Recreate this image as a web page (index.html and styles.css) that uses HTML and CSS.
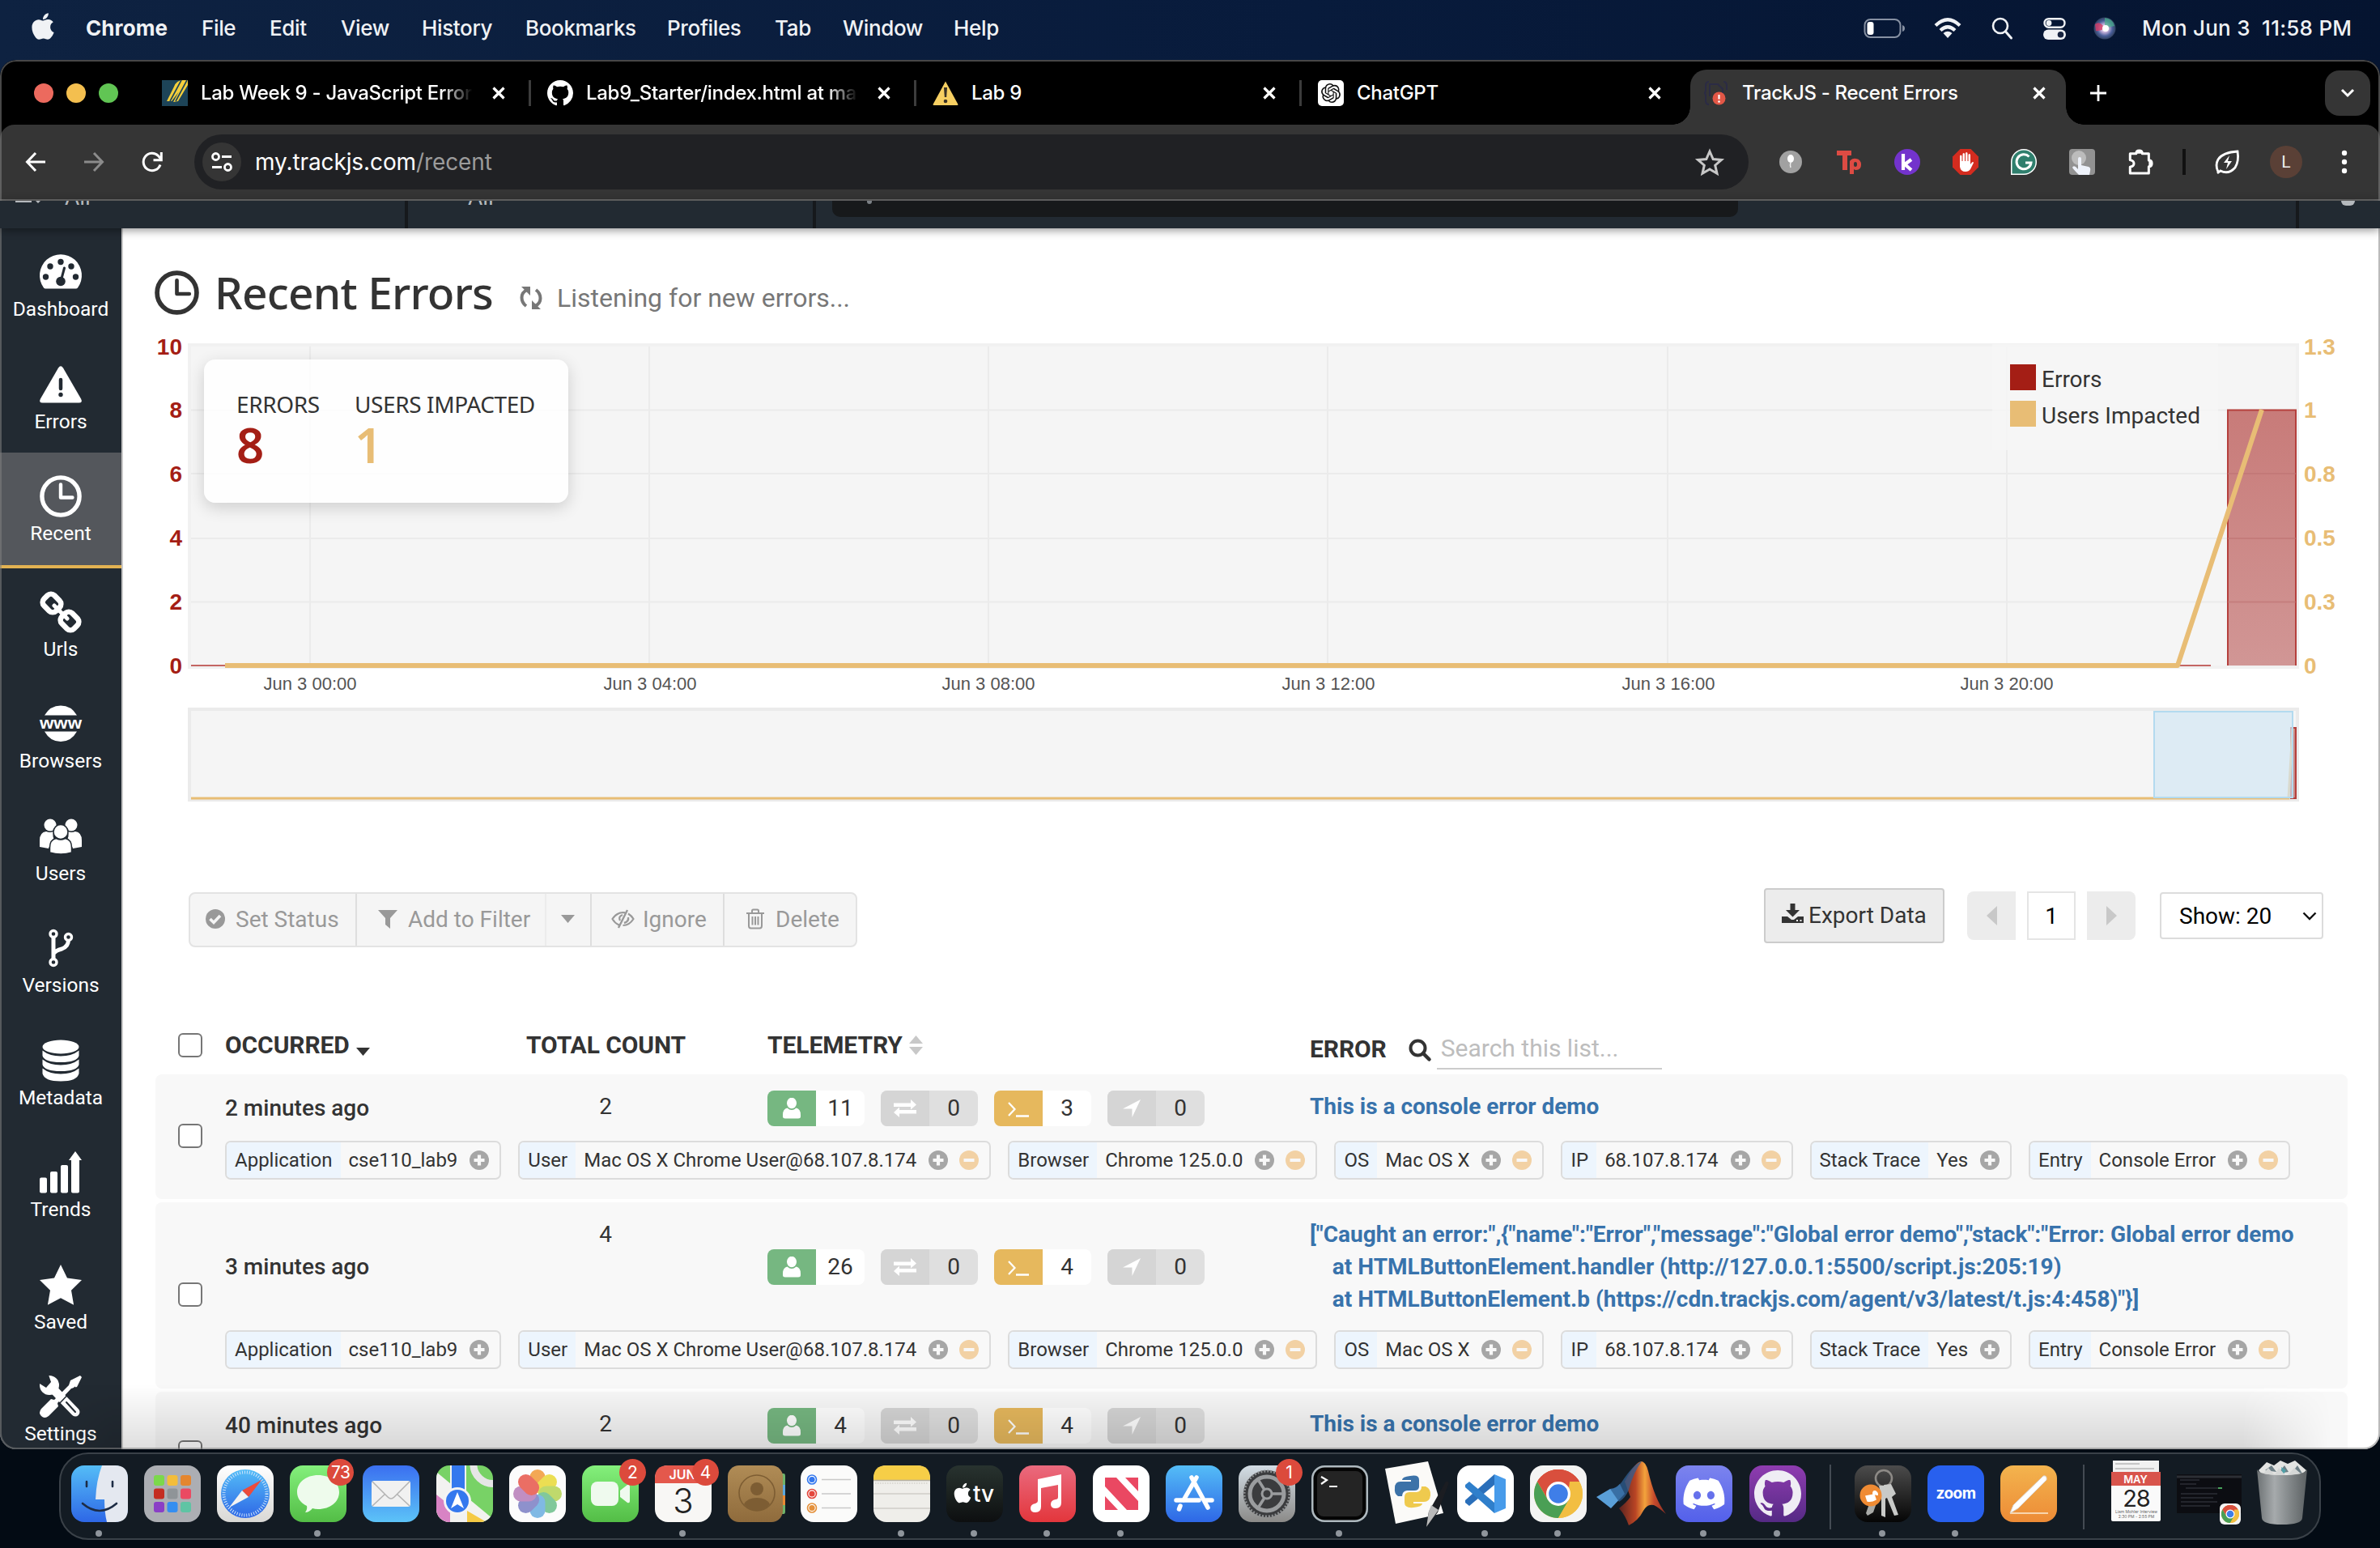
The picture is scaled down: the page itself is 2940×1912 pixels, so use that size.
FILE: index.html
```html
<!DOCTYPE html>
<html lang="en">
<head>
<meta charset="utf-8">
<title>TrackJS - Recent Errors</title>
<link rel="stylesheet" href="styles.css">
</head>
<body>
<svg class="defs" width="0" height="0" aria-hidden="true">
  <defs>
    <symbol id="github" viewBox="0 0 16 16"><path d="M8 0C3.58 0 0 3.58 0 8c0 3.54 2.29 6.53 5.47 7.59.4.07.55-.17.55-.38 0-.19-.01-.82-.01-1.49-2.01.37-2.53-.49-2.69-.94-.09-.23-.48-.94-.82-1.13-.28-.15-.68-.52-.01-.53.63-.01 1.08.58 1.23.82.72 1.21 1.87.87 2.33.66.07-.52.28-.87.51-1.07-1.78-.2-3.64-.89-3.64-3.95 0-.87.31-1.59.82-2.15-.08-.2-.36-1.02.08-2.12 0 0 .67-.21 2.2.82.64-.18 1.32-.27 2-.27s1.36.09 2 .27c1.53-1.04 2.2-.82 2.2-.82.44 1.1.16 1.92.08 2.12.51.56.82 1.27.82 2.15 0 3.07-1.87 3.75-3.65 3.95.29.25.54.73.54 1.48 0 1.07-.01 1.93-.01 2.2 0 .21.15.46.55.38A8.01 8.01 0 0 0 16 8c0-4.42-3.58-8-8-8z"/></symbol>
    <symbol id="apple" viewBox="0 0 384 512"><path d="M318.7 268.7c-.2-36.7 16.4-64.4 50-84.8-18.8-26.9-47.2-41.7-84.7-44.6-35.5-2.8-74.3 20.7-88.5 20.7-15 0-49.4-19.7-76.4-19.7C63.3 141.2 4 184.8 4 273.5q0 39.3 14.4 81.2c12.8 36.7 59 126.7 107.2 125.2 25.2-.6 43-17.9 75.8-17.9 31.8 0 48.3 17.9 76.4 17.9 48.6-.7 90.4-82.5 102.6-119.3-65.2-30.7-61.7-90-61.7-91.9zm-56.6-164.2c27.3-32.4 24.8-61.9 24-72.5-24.1 1.4-52 16.4-67.9 34.9-17.5 19.8-27.8 44.3-25.6 71.9 26.1 2 49.9-11.4 69.5-34.3z"/></symbol>
    <symbol id="close" viewBox="0 0 18 18"><path d="M2.5 2.5l13 13M15.5 2.5l-13 13" stroke="currentColor" stroke-width="3.2" fill="none"/></symbol>
    <symbol id="clock" viewBox="0 0 54 54"><circle cx="27" cy="27" r="24" fill="none" stroke="currentColor" stroke-width="5.6"/><path d="M27 12v16.500h15" fill="none" stroke="currentColor" stroke-width="4.600" stroke-linecap="round" stroke-linejoin="round"/></symbol>
    <symbol id="plus" viewBox="0 0 24 24"><circle cx="12" cy="12" r="12" fill="#a6a6a6"/><path d="M12 5.500v13M5.500 12h13" stroke="#f8f8f8" stroke-width="4.200"/></symbol>
    <symbol id="minus" viewBox="0 0 24 24"><circle cx="12" cy="12" r="12" fill="#f2d1a4"/><path d="M5.500 12h13" stroke="#f8f8f8" stroke-width="4.200"/></symbol>
    <symbol id="person" viewBox="0 0 24 26"><ellipse cx="12" cy="6.500" rx="6" ry="6.800" fill="#fff"/><path d="M6.500 12.500Q12 17.500 17.500 12.500Q23 13.500 23 21v2q0 2.500-3 2.500H4q-3 0-3-2.500v-2Q1 13.500 6.500 12.500z" fill="#fff"/></symbol>
    <symbol id="swap" viewBox="0 0 30 22"><path d="M1 4.500h21V0l7 6.500-7 6V9H1zM29 13H8V9.500l-7 6.500L8 22v-4.500h21z" fill="#fff"/></symbol>
    <symbol id="prompt" viewBox="0 0 28 20"><path d="M2 1l7.500 8L2 17" fill="none" stroke="#fff" stroke-width="2.200"/><path d="M11 17.500h16" stroke="#fff" stroke-width="2.400"/></symbol>
    <symbol id="arrow" viewBox="0 0 24 24"><path d="M23 1L12.500 23V12.500H1z" fill="#fff"/></symbol>
    <linearGradient id="barFill" x1="0" y1="0" x2="0" y2="1"><stop offset="0" stop-color="#c87b79"/><stop offset="1" stop-color="#d19695"/></linearGradient>
    <linearGradient id="gBlue" x1="0" y1="0" x2="0" y2="1"><stop offset="0" stop-color="#54bdf7"/><stop offset="1" stop-color="#2e67e6"/></linearGradient>
    <linearGradient id="gBlueR" x1="0" y1="0" x2="0" y2="1"><stop offset="0" stop-color="#3a6ff0"/><stop offset="1" stop-color="#5cc3f8"/></linearGradient>
    <linearGradient id="gGreen" x1="0" y1="0" x2="0" y2="1"><stop offset="0" stop-color="#84f07c"/><stop offset="1" stop-color="#53bd46"/></linearGradient>
    <linearGradient id="gWhite" x1="0" y1="0" x2="0" y2="1"><stop offset="0" stop-color="#ffffff"/><stop offset="1" stop-color="#d9d8d5"/></linearGradient>
    <linearGradient id="gMusic" x1="0" y1="0" x2="0" y2="1"><stop offset="0" stop-color="#ea6a7e"/><stop offset="1" stop-color="#e3363c"/></linearGradient>
    <linearGradient id="gTv" x1="0" y1="0" x2="0" y2="1"><stop offset="0" stop-color="#28332f"/><stop offset="1" stop-color="#0d0f10"/></linearGradient>
    <linearGradient id="gSet" x1="0" y1="0" x2="0" y2="1"><stop offset="0" stop-color="#d3dde5"/><stop offset="1" stop-color="#8b8a88"/></linearGradient>
    <linearGradient id="gBrown" x1="0" y1="0" x2="0" y2="1"><stop offset="0" stop-color="#b08c56"/><stop offset="1" stop-color="#8f6b3c"/></linearGradient>
    <linearGradient id="gDisc" x1="0" y1="0" x2="0" y2="1"><stop offset="0" stop-color="#7c84ee"/><stop offset="1" stop-color="#5360ea"/></linearGradient>
    <linearGradient id="gGit" x1="0" y1="0" x2="0" y2="1"><stop offset="0" stop-color="#8f3cb0"/><stop offset="1" stop-color="#552a85"/></linearGradient>
    <linearGradient id="gKey" x1="0" y1="0" x2="0" y2="1"><stop offset="0" stop-color="#4c4c4c"/><stop offset="1" stop-color="#050505"/></linearGradient>
    <linearGradient id="gPages" x1="0" y1="0" x2="0" y2="1"><stop offset="0" stop-color="#f3b44e"/><stop offset="1" stop-color="#ed8b36"/></linearGradient>
    <linearGradient id="gMat" x1="0" y1="0" x2="1" y2="0"><stop offset="0" stop-color="#5a2320"/><stop offset=".35" stop-color="#b94424"/><stop offset=".55" stop-color="#f3a33c"/><stop offset=".75" stop-color="#c64a2c"/><stop offset="1" stop-color="#8d2d22"/></linearGradient>
    <linearGradient id="gBin" x1="0" y1="0" x2="1" y2="0"><stop offset="0" stop-color="#6d7274"/><stop offset=".35" stop-color="#a6aaac"/><stop offset=".7" stop-color="#7d8284"/><stop offset="1" stop-color="#5c6163"/></linearGradient>
    <radialGradient id="gSiri"><stop offset="0" stop-color="#fff"/><stop offset=".35" stop-color="#c9b4dc"/><stop offset=".7" stop-color="#4a5f9a"/><stop offset="1" stop-color="#30405e"/></radialGradient>
    <symbol id="chrome" viewBox="0 0 60 60"><circle cx="30" cy="30" r="30" fill="#f2be42"/><path d="M30 30L4 15A30 30 0 0 1 56 15z" fill="#d94f3d"/><path d="M30 15H56A30 30 0 0 0 4 15l13 22z" fill="#d94f3d"/><path d="M4 15A30 30 0 0 0 30 60L43 37.500 17 37.500z" fill="#4a9f55"/><path d="M30 60L43 37.500A15 15 0 0 0 43 22L44 15H56A30 30 0 0 1 30 60z" fill="#f2be42"/><circle cx="30" cy="30" r="15" fill="#fff"/><circle cx="30" cy="30" r="11.800" fill="#3f7ee8"/></symbol>
  </defs>
</svg>

<header class="menubar">
  <nav class="menus">
    <svg class="apple"><use href="#apple"/></svg>
    <span class="app">Chrome</span><span>File</span><span>Edit</span><span>View</span><span>History</span><span>Bookmarks</span><span>Profiles</span><span>Tab</span><span>Window</span><span>Help</span>
  </nav>
  <div class="status">
    <svg width="52" height="26" viewBox="0 0 52 26"><rect x="1.500" y="2" width="44" height="22" rx="7" fill="none" stroke="#8791a3" stroke-width="2"/><rect x="4.500" y="5" width="8" height="16" rx="3" fill="#fff"/><path d="M48 9q3 1 3 4t-3 4z" fill="#8791a3"/></svg>
    <svg width="34" height="26" viewBox="0 0 34 26"><g fill="none" stroke="#f0f2f5" stroke-width="4.200"><path d="M2 9.500Q17-5 32 9.500"/><path d="M8 15.500Q17 7 26 15.500"/></g><path d="M17 25l-5.500-6q5.500-4.500 11 0z" fill="#f0f2f5"/></svg>
    <svg width="26" height="28" viewBox="0 0 26 28"><circle cx="11" cy="11" r="9" fill="none" stroke="#f0f2f5" stroke-width="2.600"/><path d="M17.500 18l7 8" stroke="#f0f2f5" stroke-width="3" stroke-linecap="round"/></svg>
    <svg width="28" height="28" viewBox="0 0 28 28"><rect x="1.500" y="2.200" width="25" height="10.500" rx="5.200" fill="none" stroke="#f0f2f5" stroke-width="2.400"/><circle cx="7" cy="7.500" r="3.400" fill="#f0f2f5"/><rect y="15.500" width="28" height="12.500" rx="6.200" fill="#f0f2f5"/><circle cx="21.500" cy="21.700" r="3.800" fill="#16233f"/></svg>
    <svg width="28" height="28" viewBox="0 0 28 28"><circle cx="14" cy="14" r="13.500" fill="url(#gSiri)"/><path d="M2 9Q8 4 14 14 8 18 3 17z" fill="#d83b64" opacity=".8"/><path d="M14 1q10 1 12 10l-12 3z" fill="#49b08b" opacity=".7"/><circle cx="15" cy="14" r="4" fill="#fff"/></svg>
    <time>Mon Jun 3&nbsp; 11:58 PM</time>
  </div>
</header>

<section class="window">
  <div class="tabstrip">
    <div class="lights"><i class="red"></i><i class="yellow"></i><i class="green"></i></div>
    <div class="tab">
      <svg class="fav" viewBox="0 0 32 32"><rect width="32" height="32" fill="#1d4458"/><path d="M6 26L15 8Q18 0 26 0h6L12 26zM14 27L27 3q2-3 5-3v6L20 26z" fill="#f4cf3c"/><path d="M10 26L24 0M17 26L31 0" stroke="#1d4458" stroke-width="1.600"/></svg>
      <span class="name fade">Lab Week 9 - JavaScript Error</span><svg class="x"><use href="#close"/></svg>
    </div>
    <div class="tab">
      <svg class="fav" fill="#fff"><use href="#github"/></svg>
      <span class="name fade">Lab9_Starter/index.html at ma</span><svg class="x"><use href="#close"/></svg>
    </div>
    <div class="tab">
      <svg class="fav" viewBox="0 0 32 32"><path d="M16 1.500L31.500 30q0 1-1 1h-29q-1 0-1-1z" fill="#f7cf62"/><path d="M14 9h4l-.8 12h-2.400z" fill="#3a3226"/><circle cx="16" cy="26" r="2.300" fill="#3a3226"/></svg>
      <span class="name">Lab 9</span><svg class="x"><use href="#close"/></svg>
    </div>
    <div class="tab last">
      <svg class="fav" viewBox="0 0 32 32"><rect width="32" height="32" rx="5" fill="#fff"/><path transform="translate(4 4)" d="M22.2819 9.8211a5.9847 5.9847 0 0 0-.5157-4.9108 6.0462 6.0462 0 0 0-6.5098-2.9A6.0651 6.0651 0 0 0 4.9807 4.1818a5.9847 5.9847 0 0 0-3.9977 2.9 6.0462 6.0462 0 0 0 .7427 7.0966 5.98 5.98 0 0 0 .511 4.9107 6.051 6.051 0 0 0 6.5146 2.9001A5.9847 5.9847 0 0 0 13.2599 24a6.0557 6.0557 0 0 0 5.7718-4.2058 5.9894 5.9894 0 0 0 3.9977-2.9001 6.0557 6.0557 0 0 0-.7475-7.0729zm-9.022 12.6081a4.4755 4.4755 0 0 1-2.8764-1.0408l.1419-.0804 4.7783-2.7582a.7948.7948 0 0 0 .3927-.6813v-6.7369l2.02 1.1686a.071.071 0 0 1 .038.052v5.5826a4.504 4.504 0 0 1-4.4945 4.4944zm-9.6607-4.1254a4.4708 4.4708 0 0 1-.5346-3.0137l.142.0852 4.783 2.7582a.7712.7712 0 0 0 .7806 0l5.8428-3.3685v2.3324a.0804.0804 0 0 1-.0332.0615L9.74 19.9502a4.4992 4.4992 0 0 1-6.1408-1.6464zM2.3408 7.8956a4.485 4.485 0 0 1 2.3655-1.9728V11.6a.7664.7664 0 0 0 .3879.6765l5.8144 3.3543-2.0201 1.1685a.0757.0757 0 0 1-.071 0l-4.8303-2.7865A4.504 4.504 0 0 1 2.3408 7.872zm16.5963 3.8558L13.1038 8.364 15.1192 7.2a.0757.0757 0 0 1 .071 0l4.8303 2.7913a4.4944 4.4944 0 0 1-.6765 8.1042v-5.6772a.79.79 0 0 0-.407-.667zm2.0107-3.0231l-.142-.0852-4.7735-2.7818a.7759.7759 0 0 0-.7854 0L9.409 9.2297V6.8974a.0662.0662 0 0 1 .0284-.0615l4.8303-2.7866a4.4992 4.4992 0 0 1 6.6802 4.66zM8.3065 12.863l-2.02-1.1638a.0804.0804 0 0 1-.038-.0567V6.0742a4.4992 4.4992 0 0 1 7.3757-3.4537l-.142.0805L8.704 5.459a.7948.7948 0 0 0-.3927.6813zm1.0976-2.3654l2.602-1.4998 2.6069 1.4998v2.9994l-2.5974 1.4997-2.6067-1.4997Z" fill="#111"/></svg>
      <span class="name">ChatGPT</span><svg class="x"><use href="#close"/></svg>
    </div>
    <div class="tab active">
      <svg class="fav" viewBox="0 0 32 32"><path d="M7 2Q3 2 3 7v5q0 4-2 4 2 0 2 4v5q0 5 4 5M25 2q4 0 4 5v5M8 20V5h10l6 6v5" fill="none" stroke="#2b2b45" stroke-width="2"/><circle cx="19.500" cy="22.500" r="8" fill="#e25746"/><path d="M19.500 18v5.500" stroke="#fff" stroke-width="2.200"/><circle cx="19.500" cy="26.500" r="1.300" fill="#fff"/></svg>
      <span class="name">TrackJS - Recent Errors</span><svg class="x"><use href="#close"/></svg>
    </div>
    <svg class="newtab" viewBox="0 0 20 20"><path d="M10 0v20M0 10h20" stroke="#fff" stroke-width="2.800"/></svg>
    <div class="tabsearch"><svg width="18" height="12" viewBox="0 0 18 12"><path d="M2 2l7 7 7-7" fill="none" stroke="#fff" stroke-width="3"/></svg></div>
  </div>

  <div class="toolbar">
    <div class="navbtns">
      <svg width="26" height="26" viewBox="0 0 26 26"><path d="M25 13H3M13 2L2.500 13 13 24" fill="none" stroke="#fff" stroke-width="3"/></svg>
      <svg width="26" height="26" viewBox="0 0 26 26"><path d="M1 13h22M13 2l10.500 11L13 24" fill="none" stroke="#8b8b8b" stroke-width="3"/></svg>
      <svg width="26" height="26" viewBox="0 0 26 26"><path d="M23 16.500A10.700 10.700 0 1 1 20.500 5.500L23.500 9" fill="none" stroke="#fff" stroke-width="3"/><path d="M24.300 1v9.800h-9.800" fill="none" stroke="#fff" stroke-width="3"/></svg>
    </div>
    <div class="omnibox">
      <span class="site"><svg width="26" height="24" viewBox="0 0 26 24"><g fill="none" stroke="#fff" stroke-width="2.800"><circle cx="5.500" cy="5.500" r="4"/><path d="M13 5.500h12M1 18.500h12"/><circle cx="20.500" cy="18.500" r="4"/></g></svg></span>
      <span class="url">my.trackjs.com<em>/recent</em></span>
      <svg class="star" width="34" height="32" viewBox="0 0 34 32"><path d="M17 3l4.200 9.500 10.300.9-7.800 6.800 2.300 10L17 25l-9 5.200 2.300-10-7.800-6.800 10.300-.9z" fill="none" stroke="#c7c7c7" stroke-width="3"/></svg>
    </div>
    <div class="exts">
      <svg viewBox="0 0 32 32"><circle cx="16" cy="16" r="14" fill="#a1a1a1"/><ellipse cx="16" cy="12" rx="4" ry="5" fill="#fff"/><path d="M16 16q-1 4 0 7" stroke="#eee" stroke-width="1.500" fill="none"/></svg>
      <svg viewBox="0 0 32 32"><path d="M1 2h18v6h-5v18H8V8H1z" fill="#dd4b43"/><path d="M17 31V15q3-4 8-3 6 1 6 7.500T25 26q-2 0-3-1v6zM22 20q0 2 2 2t2-3-2-3-2 2z" fill="#dd4b43" fill-rule="evenodd"/></svg>
      <svg viewBox="0 0 32 32"><circle cx="16" cy="16" r="16" fill="#7333cc"/><path d="M11 6v20M21 13l-8 6 8 7" stroke="#fff" stroke-width="4.200" fill="none"/></svg>
      <svg viewBox="0 0 32 32"><path d="M9.500 0h13L32 9.500v13L22.500 32h-13L0 22.500v-13z" fill="#d42c1f"/><path d="M9 17V9q0-1.500 1.200-1.500T11.500 9v6h1V6.500q0-1.500 1.300-1.500t1.200 1.500V15h1V5.500Q16 4 17.200 4t1.300 1.500V15h1V7.500Q19.500 6 20.800 6 22 6 22 7.500V19l2-2.500q1.500-1 2 .5l-4 8q-2 3-6 3-6 0-7-6z" fill="#fff"/></svg>
      <svg viewBox="0 0 32 32"><path d="M16 0a16 16 0 1 1 0 32H0V16A16 16 0 0 1 16 0z" fill="#fff"/><path d="M16 1.500a14.500 14.500 0 1 1 0 29H1.500V16A14.500 14.500 0 0 1 16 1.500z" fill="#2f7f6d"/><path d="M22.500 9.500A9 9 0 1 0 25 17h-7" fill="none" stroke="#fff" stroke-width="3"/></svg>
      <svg viewBox="0 0 32 32"><rect width="32" height="32" rx="4" fill="#929292"/><circle cx="12" cy="11" r="9" fill="#bcbcbc"/><path d="M11 12q0-2 2-2t2 2v8l9 2q3 1 2 5l-1 5H12q-6-6-8-9 1-3 4-1l3 3z" fill="#eef2fa"/></svg>
      <svg viewBox="0 0 34 34"><path d="M3.500 6h8q0-4 4-4t4 4h8.500v9q4 0 4 4t-4 4v9H3.500v-8.500q5-1 5-4.500t-5-4.500z" fill="none" stroke="#fff" stroke-width="3.200" stroke-linejoin="round"/><path d="M12 6q0-4 3.500-4T19 6zM28 15q4 0 4 4t-4 4z" fill="#fff"/></svg>
      <i class="bar"></i>
      <svg viewBox="0 0 32 32"><path d="M4 28q-4-8 0-15Q10 4 28 3q2 12-3 20-8 9-18 4l-4 3" fill="none" stroke="#fff" stroke-width="2.800"/><path d="M18 8l-7 9h5l-2 8 7-10h-5z" fill="#fff"/></svg>
      <span class="avatar">L</span>
      <svg viewBox="0 0 32 32"><g fill="#fff"><circle cx="16" cy="5" r="3.200"/><circle cx="16" cy="16" r="3.200"/><circle cx="16" cy="27" r="3.200"/></g></svg>
    </div>
  </div>

  <div class="apphead">
    <div class="pick first"><svg width="32" height="3" viewBox="0 0 32 3"><path d="M0 0h20v2H0zM25 0h6l-3 3z" fill="#b5b9bd"/></svg><span>All</span></div>
    <div class="pick"><span>All</span></div>
    <div class="query"><i></i></div>
    <div class="acct"><i></i></div>
  </div>

  <div class="page">
    <aside class="side">
      <a><svg viewBox="0 0 52 52"><path d="M5 45.500A26 26 0 1 1 47 45.500Q46 46.500 45 46.500H7Q6 46.500 5 45.500z" fill="#fff"/><g fill="#222a32"><circle cx="26" cy="13.500" r="3.700"/><circle cx="13" cy="19" r="3.700"/><circle cx="39" cy="19" r="3.700"/><circle cx="7.500" cy="32" r="3.700"/><circle cx="44.500" cy="32" r="3.700"/><circle cx="26" cy="37.500" r="5.800"/></g><path d="M26.500 36l4-15" stroke="#222a32" stroke-width="3" stroke-linecap="round"/></svg><span>Dashboard</span></a>
      <a><svg viewBox="0 0 52 52"><path d="M23 5.500q3-4.500 6 0l22 38q2.500 5-2.500 5h-45q-5 0-2.500-5z" fill="#fff"/><path d="M26 20v11" stroke="#222a32" stroke-width="4.500" stroke-linecap="round"/><circle cx="26" cy="38.500" r="2.700" fill="#222a32"/></svg><span>Errors</span></a>
      <a class="on"><svg><use href="#clock"/></svg><span>Recent</span></a>
      <a><svg viewBox="0 0 52 52"><g fill="none" stroke="#fff" stroke-width="6.600"><rect x="4.500" y="6" width="21" height="18" rx="6" transform="rotate(45 15 15)"/><rect x="26.500" y="28" width="21" height="18" rx="6" transform="rotate(45 37 37)"/></g><path d="M18 18l16 16" stroke="#fff" stroke-width="5" stroke-linecap="round"/></svg><span>Urls</span></a>
      <a><svg viewBox="0 0 52 52"><path d="M6 15.500Q13 3.500 26 3.500T46 15.500zM6 35.500h40Q39 48 26 48T6 35.500z" fill="#fff"/><text x="26" y="31.500" text-anchor="middle" textLength="52" lengthAdjust="spacingAndGlyphs" class="www">www</text></svg><span>Browsers</span></a>
      <a><svg viewBox="0 0 52 52"><g fill="#fff"><circle cx="13" cy="12" r="7.500"/><circle cx="39" cy="12" r="7.500"/><path d="M0 39V31q0-10 8-11 5 2 9 0-2 7 2 11-6 2-8 10zM52 39V31q0-10-8-11-5 2-9 0 2 7-2 11 6 2 8 10z"/></g><g fill="#fff" stroke="#222a32" stroke-width="1.500"><path d="M12.500 46V40q0-10 8-11.500 5.500 3 11 0Q39.500 30 39.500 40v6q-13 4-27 0z"/><circle cx="26" cy="20.500" r="9"/></g></svg><span>Users</span></a>
      <a><svg viewBox="0 0 52 52"><g fill="none" stroke="#fff"><g stroke-width="3.400"><circle cx="17" cy="8.500" r="4"/><circle cx="17" cy="43.500" r="4"/><circle cx="35.500" cy="12.500" r="4"/></g><path d="M17 12v28M35.500 16q0 8-8 11-8 2-10.500 6" stroke-width="5"/></g></svg><span>Versions</span></a>
      <a><svg viewBox="0 0 52 52"><g fill="#fff"><ellipse cx="26" cy="9" rx="22.500" ry="8.500"/><path d="M3.500 13.500Q12 20.500 26 20.500t22.500-7V20Q46 28 26 28T3.500 20zM3.500 24.500Q12 31.500 26 31.500t22.500-7V31Q46 39 26 39T3.500 31zM3.500 35.500Q12 42.500 26 42.500t22.500-7V42Q46 51.500 26 51.500T3.500 42z"/></g></svg><span>Metadata</span></a>
      <a><svg viewBox="0 0 52 52"><g fill="#fff"><rect y="32.500" width="9" height="19" rx="2"/><rect x="13" y="25" width="9" height="26.500" rx="2"/><rect x="26" y="17" width="9" height="34.500" rx="2"/><path d="M39 11h-3l8-11 8 11h-3v38.500q0 2-2 2h-6q-2 0-2-2z"/></g></svg><span>Trends</span></a>
      <a><svg viewBox="0 0 52 52"><path d="M26 1l8 16.500 18 2.600-13 12.700 3.100 18L26 42.300 9.900 50.800 13 32.800 0 20.100l18-2.600z" fill="#fff"/></svg><span>Saved</span></a>
      <a><svg viewBox="0 0 52 52"><path d="M50 0l2 2-6 12-7 2-17 18 1 4-12 12q-5 4-9 0t0-9L14 29l4 1L36 12l2-6z" fill="#fff"/><path d="M14 14L44 45" stroke="#fff" stroke-width="11" stroke-linecap="round"/><path d="M33 33l11 12" stroke="#222a32" stroke-width="2" stroke-linecap="round"/><circle cx="12" cy="12" r="12" fill="#fff"/><path d="M0-1h11l3 9-6 7-8-5z" fill="#222a32"/><path d="M18 35L39 13" stroke="#222a32" stroke-width="1.500" transform="translate(5 1)"/></svg><span>Settings</span></a>
    </aside>

    <main class="main">
      <div class="title">
        <svg class="tclock"><use href="#clock"/></svg>
        <h1>Recent Errors</h1>
        <svg class="sync" viewBox="0 0 28 28"><g fill="none" stroke="#777" stroke-width="4"><path d="M8 24Q2.500 20 2.500 13.500T9 4"/><path d="M20 4q5.500 4 5.500 10.500T19 24"/></g><path d="M2 0h11v11zM26 28H15V17z" fill="#777"/></svg>
        <span>Listening for new errors...</span>
      </div>

      <div class="charts">
        <svg class="chart" viewBox="152 400 2788 600" width="2788" height="600">
          <rect x="234" y="426" width="2604" height="398" fill="#f5f5f5" stroke="#f1f1f1" stroke-width="4"/>
          <g stroke="#ebebeb" stroke-width="2"><path d="M236 506.500H2836M236 585H2836M236 665H2836M236 743.500H2836"/><path d="M383 428V820M802 428V820M1221 428V820M1640 428V820M2060 428V820M2479 428V820"/></g>
          <rect x="2752" y="506.500" width="84" height="315.500" fill="url(#barFill)"/>
          <path d="M2752 822V506.500H2836V822" fill="none" stroke="#b5403d" stroke-width="2"/>
          <path d="M2752 585h84M2752 665h84M2752 743.500h84" stroke="#bf7473" stroke-width="2" opacity=".6"/>
          <path d="M236 822h44M2690 822h41" stroke="#c46663" stroke-width="2"/>
          <path d="M278 822H2690L2794 506" fill="none" stroke="#e8bd75" stroke-width="6" stroke-linejoin="round"/>
          <rect x="2461" y="425" width="279" height="131" fill="#f6f6f6" opacity=".85"/>
          <rect x="2483" y="450" width="32" height="32" fill="#a41e15"/><rect x="2483" y="495" width="32" height="32" fill="#e8bd75"/>
          <g class="legend"><text x="2522" y="478">Errors</text><text x="2522" y="523" textLength="196">Users Impacted</text></g>
          <g class="yl" text-anchor="end"><text x="225" y="438">10</text><text x="225" y="516">8</text><text x="225" y="595">6</text><text x="225" y="674">4</text><text x="225" y="753">2</text><text x="225" y="832">0</text></g>
          <g class="yr"><text x="2846" y="438">1.3</text><text x="2846" y="516">1</text><text x="2846" y="595">0.8</text><text x="2846" y="674">0.5</text><text x="2846" y="753">0.3</text><text x="2846" y="832">0</text></g>
          <g class="xl" text-anchor="middle"><text x="383" y="852">Jun 3 00:00</text><text x="803" y="852">Jun 3 04:00</text><text x="1221" y="852">Jun 3 08:00</text><text x="1641" y="852">Jun 3 12:00</text><text x="2061" y="852">Jun 3 16:00</text><text x="2479" y="852">Jun 3 20:00</text></g>
          <rect x="234" y="876" width="2604" height="112" fill="#f5f5f5" stroke="#ebebeb" stroke-width="4"/>
          <rect x="2830" y="899" width="6" height="87" fill="#c98a88" stroke="#b5403d" stroke-width="2"/>
          <path d="M236 986H2827L2832 900" fill="none" stroke="#e8bd75" stroke-width="3"/>
          <rect x="2661" y="879" width="171" height="106" fill="#d3e7f3" fill-opacity=".7" stroke="#b3daef" stroke-width="2"/>
        </svg>
        <div class="card">
          <div><b>ERRORS</b><strong class="r">8</strong></div>
          <div><b>USERS IMPACTED</b><strong class="y">1</strong></div>
        </div>
      </div>

      <div class="actions">
        <div class="group">
          <span class="b1"><svg width="24" height="24" viewBox="0 0 24 24"><circle cx="12" cy="12" r="12" fill="#999"/><path d="M5.500 12l4.500 4.500 8-8.500" fill="none" stroke="#f5f5f5" stroke-width="3.600"/></svg>Set Status</span>
          <span class="b2"><svg width="24" height="24" viewBox="0 0 24 24"><path d="M0 1h24l-9 10v13l-6-5v-8z" fill="#999"/></svg>Add to Filter</span>
          <span class="b3"><svg width="17" height="10" viewBox="0 0 17 10"><path d="M0 0h17l-8.500 10z" fill="#999"/></svg></span>
          <span class="b4"><svg width="29" height="24" viewBox="0 0 29 24"><path d="M10 19.500Q5 18 1.500 12 7 4 14.500 4l3 .4M21 5.500q4 2.500 6.500 6.500-5 8-13 8M11 14q-2.500-5 3-7" fill="none" stroke="#999" stroke-width="2.200"/><path d="M20 1L9 23M21 10q1 5-5 7" stroke="#999" stroke-width="2.400" fill="none"/></svg>Ignore</span>
          <span class="b5"><svg width="24" height="26" viewBox="0 0 24 26"><path d="M1 6h22M8 6V3q0-1.500 1.500-1.500h5Q16 1.500 16 3v3M4 6v15.500q0 3 2.500 3h11q2.500 0 2.500-3V6M8.500 10v10.500M12 10v10.500M15.500 10v10.500" fill="none" stroke="#999" stroke-width="2"/></svg>Delete</span>
        </div>
        <div class="right">
          <span class="export"><svg width="27" height="24" viewBox="0 0 27 24"><path d="M10.500 0h6v8h5.500l-8.500 8.500L5 8h5.500z" fill="#333"/><path d="M0 16h7l5 4h3l5-4h7v8H0z" fill="#333"/><path d="M18 21h2M22.500 21h2" stroke="#eee" stroke-width="1.800"/></svg>Export Data</span>
          <span class="pg prev"><svg width="13" height="24" viewBox="0 0 13 24"><path d="M13 0v24L0 12z" fill="#c8c8c8"/></svg></span>
          <span class="pg cur">1</span>
          <span class="pg next"><svg width="13" height="24" viewBox="0 0 13 24"><path d="M0 0v24l13-12z" fill="#c8c8c8"/></svg></span>
          <span class="show">Show: 20<svg width="18" height="11" viewBox="0 0 18 11"><path d="M1.500 1.500L9 9l7.500-7.500" fill="none" stroke="#111" stroke-width="2.400"/></svg></span>
        </div>
      </div>

      <div class="thead">
        <i class="check"></i>
        <div class="cols">
          <b>OCCURRED<svg class="down" width="17" height="10" viewBox="0 0 17 10"><path d="M0 0h17l-8.500 10z" fill="#333"/></svg></b>
          <b class="tc">TOTAL COUNT</b>
          <b>TELEMETRY<svg class="sort" width="17" height="24" viewBox="0 0 17 24"><path d="M0 10h17L8.500 0zM0 14h17l-8.500 10z" fill="#c8c8c8"/></svg></b>
          <div class="err"><b>ERROR</b><svg width="28" height="28" viewBox="0 0 28 28"><circle cx="11.500" cy="11.500" r="9" fill="none" stroke="#333" stroke-width="4"/><path d="M18 18l7.500 7.500" stroke="#333" stroke-width="4.500" stroke-linecap="round"/></svg><span>Search this list...</span></div>
        </div>
      </div>

      <div class="row">
        <i class="check"></i>
        <div class="body">
          <div class="cols">
            <strong>2 minutes ago</strong><span class="tc">2</span>
            <div class="tel"><span class="g"><i><svg><use href="#person"/></svg></i>11</span><span class="off"><i><svg class="sw"><use href="#swap"/></svg></i>0</span><span class="o"><i><svg class="pr"><use href="#prompt"/></svg></i>3</span><span class="off"><i><svg><use href="#arrow"/></svg></i>0</span></div>
            <a>This is a console error demo</a>
          </div>
          <div class="tags">
            <span><b>Application</b>cse110_lab9<svg><use href="#plus"/></svg></span>
            <span><b>User</b>Mac OS X Chrome User@68.107.8.174<svg><use href="#plus"/></svg><svg><use href="#minus"/></svg></span>
            <span><b>Browser</b>Chrome 125.0.0<svg><use href="#plus"/></svg><svg><use href="#minus"/></svg></span>
            <span><b>OS</b>Mac OS X<svg><use href="#plus"/></svg><svg><use href="#minus"/></svg></span>
            <span><b>IP</b>68.107.8.174<svg><use href="#plus"/></svg><svg><use href="#minus"/></svg></span>
            <span><b>Stack Trace</b>Yes<svg><use href="#plus"/></svg></span>
            <span><b>Entry</b>Console Error<svg><use href="#plus"/></svg><svg><use href="#minus"/></svg></span>
          </div>
        </div>
      </div>

      <div class="row">
        <i class="check"></i>
        <div class="body">
          <div class="cols">
            <strong>3 minutes ago</strong><span class="tc">4</span>
            <div class="tel"><span class="g"><i><svg><use href="#person"/></svg></i>26</span><span class="off"><i><svg class="sw"><use href="#swap"/></svg></i>0</span><span class="o"><i><svg class="pr"><use href="#prompt"/></svg></i>4</span><span class="off"><i><svg><use href="#arrow"/></svg></i>0</span></div>
            <a>["Caught an error:",{"name":"Error","message":"Global error demo","stack":"Error: Global error demo
    at HTMLButtonElement.handler (http://127.0.0.1:5500/script.js:205:19)
    at HTMLButtonElement.b (https://cdn.trackjs.com/agent/v3/latest/t.js:4:458)"}]</a>
          </div>
          <div class="tags">
            <span><b>Application</b>cse110_lab9<svg><use href="#plus"/></svg></span>
            <span><b>User</b>Mac OS X Chrome User@68.107.8.174<svg><use href="#plus"/></svg><svg><use href="#minus"/></svg></span>
            <span><b>Browser</b>Chrome 125.0.0<svg><use href="#plus"/></svg><svg><use href="#minus"/></svg></span>
            <span><b>OS</b>Mac OS X<svg><use href="#plus"/></svg><svg><use href="#minus"/></svg></span>
            <span><b>IP</b>68.107.8.174<svg><use href="#plus"/></svg><svg><use href="#minus"/></svg></span>
            <span><b>Stack Trace</b>Yes<svg><use href="#plus"/></svg></span>
            <span><b>Entry</b>Console Error<svg><use href="#plus"/></svg><svg><use href="#minus"/></svg></span>
          </div>
        </div>
      </div>

      <div class="row cut">
        <i class="check"></i>
        <div class="body">
          <div class="cols">
            <strong>40 minutes ago</strong><span class="tc">2</span>
            <div class="tel"><span class="g"><i><svg><use href="#person"/></svg></i>4</span><span class="off"><i><svg class="sw"><use href="#swap"/></svg></i>0</span><span class="o"><i><svg class="pr"><use href="#prompt"/></svg></i>4</span><span class="off"><i><svg><use href="#arrow"/></svg></i>0</span></div>
            <a>This is a console error demo</a>
          </div>
        </div>
      </div>
    </main>
  </div>
</section>

<footer class="dock">
  <div class="app run"><svg viewBox="0 0 70 70"><rect width="70" height="70" rx="16" fill="url(#gBlue)"/><path d="M38 0H54Q70 0 70 16V54Q70 70 54 70H44q-3-12-3-28H30Q31 18 38 0z" fill="#e4e8f0"/><path d="M19 20v6M51 20v6" stroke="#1d2c45" stroke-width="2.600" stroke-linecap="round"/><path d="M14 47q21 18 42 0" fill="none" stroke="#1d2c45" stroke-width="2.600" stroke-linecap="round"/></svg></div>
  <div class="app"><svg viewBox="0 0 70 70"><rect width="70" height="70" rx="16" fill="#acaeb3"/><g><rect x="12" y="12" width="13" height="13" rx="3" fill="#7bd84b"/><rect x="28.500" y="12" width="13" height="13" rx="3" fill="#f3bd3a"/><rect x="45" y="12" width="13" height="13" rx="3" fill="#e4862f"/><rect x="12" y="28.500" width="13" height="13" rx="3" fill="#c42d22"/><rect x="28.500" y="28.500" width="13" height="13" rx="3" fill="#8f9498"/><rect x="45" y="28.500" width="13" height="13" rx="3" fill="#ea4a62"/><rect x="12" y="45" width="13" height="13" rx="3" fill="#8a3fc6"/><rect x="28.500" y="45" width="13" height="13" rx="3" fill="#358ef0"/><rect x="45" y="45" width="13" height="13" rx="3" fill="#5fc4a4"/></g></svg></div>
  <div class="app"><svg viewBox="0 0 70 70"><rect width="70" height="70" rx="16" fill="url(#gWhite)"/><circle cx="35" cy="35" r="30" fill="url(#gBlue)"/><circle cx="35" cy="35" r="26.500" fill="none" stroke="#cfe5fb" stroke-width="4" stroke-dasharray="1 2"/><path d="M55 18L39 39 31 31z" fill="#ec4b3b"/><path d="M15 52L31 31l8 8z" fill="#f2f2f2"/></svg></div>
  <div class="app run"><svg viewBox="0 0 70 70"><rect width="70" height="70" rx="16" fill="url(#gGreen)"/><path d="M35 12c15 0 26 9 26 21S50 54 35 54q-4 0-7-1-4 5-9 5 3-4 2-8C13 46 9 40 9 33c0-12 11-21 26-21z" fill="#eefbec"/></svg><em>73</em></div>
  <div class="app"><svg viewBox="0 0 70 70"><rect width="70" height="70" rx="16" fill="url(#gBlueR)"/><rect x="11" y="19" width="48" height="32" rx="3" fill="#f1f1f1"/><path d="M12 20l19 19q4 4 8 0l19-19M12 50l16-15M58 50L42 35" fill="none" stroke="#b4b4b4" stroke-width="1.600"/></svg></div>
  <div class="app"><svg viewBox="0 0 70 70"><clipPath id="r"><rect width="70" height="70" rx="16"/></clipPath><g clip-path="url(#r)"><rect width="70" height="70" fill="#78d266"/><path d="M0 8L70 66V70H0z" fill="#f2f2f0"/><path d="M0 36L20 52V70H0z" fill="#d883c4"/><path d="M38 56L62 70H38z" fill="#f5ca45"/><path d="M17 0h20v70H17z" fill="#f2f2f0"/><path d="M19 0h16v30H19z" fill="#3478ee"/><path d="M46-4a24 24 0 0 0 28 26" fill="none" stroke="#e6e6e6" stroke-width="9"/><circle cx="26" cy="44" r="17" fill="#f4f4f4"/><circle cx="26" cy="44" r="14" fill="#3478ee"/><path d="M26 33l8 20-8-5-8 5z" fill="#fff"/></g></svg></div>
  <div class="app"><svg viewBox="0 0 70 70"><rect width="70" height="70" rx="16" fill="#fcfcfc"/><g opacity=".85"><rect x="25.500" y="5" width="19" height="29" rx="9.500" fill="#f29a38"/><rect x="25.500" y="5" width="19" height="29" rx="9.500" fill="#e9d936" transform="rotate(45 35 35)"/><rect x="25.500" y="5" width="19" height="29" rx="9.500" fill="#b5d353" transform="rotate(90 35 35)"/><rect x="25.500" y="5" width="19" height="29" rx="9.500" fill="#6cbf8b" transform="rotate(135 35 35)"/><rect x="25.500" y="5" width="19" height="29" rx="9.500" fill="#6baee0" transform="rotate(180 35 35)"/><rect x="25.500" y="5" width="19" height="29" rx="9.500" fill="#7b7fc4" transform="rotate(225 35 35)"/><rect x="25.500" y="5" width="19" height="29" rx="9.500" fill="#b77bb8" transform="rotate(270 35 35)"/><rect x="25.500" y="5" width="19" height="29" rx="9.500" fill="#e8564a" transform="rotate(315 35 35)"/></g></svg></div>
  <div class="app"><svg viewBox="0 0 70 70"><rect width="70" height="70" rx="16" fill="url(#gGreen)"/><rect x="11" y="20" width="34" height="30" rx="8" fill="#effaee"/><path d="M47 31l9-7q3-1 3 2v18q0 3-3 2l-9-7z" fill="#effaee"/></svg><em>2</em></div>
  <div class="app run"><svg viewBox="0 0 70 70"><rect width="70" height="70" rx="16" fill="#f8f7f5"/><path d="M0 22V16Q0 0 16 0H54Q70 0 70 16V22z" fill="#e4584c"/><text x="34" y="17" class="t jun">JUN</text><text x="35" y="59" class="t day">3</text></svg><em>4</em></div>
  <div class="app"><svg viewBox="0 0 70 70"><path d="M60 10h9q2 0 2 3v44q0 3-2 3h-9z" fill="#6fb36a"/><path d="M64 24h7v13h-7z" fill="#5da8dd"/><path d="M64 37h7v12h-7z" fill="#ea8a34"/><rect width="68" height="70" rx="14" fill="url(#gBrown)"/><circle cx="36" cy="34" r="22" fill="none" stroke="#7d5d33" stroke-width="1.600"/><circle cx="36" cy="29" r="8" fill="#7d5d33"/><path d="M20 48q4-8 16-8t16 8q-7 8-16 8t-16-8z" fill="#7d5d33"/></svg></div>
  <div class="app"><svg viewBox="0 0 70 70"><rect width="70" height="70" rx="16" fill="#fbfbfa"/><g stroke="#c9c9c9" stroke-width="1.600"><path d="M26 17.500h36M26 35h36M26 52.500h36"/></g><g stroke-width="1.600" fill="#fff"><circle cx="14" cy="17.500" r="5.500" stroke="#3478ee"/><circle cx="14" cy="35" r="5.500" stroke="#e4473d"/><circle cx="14" cy="52.500" r="5.500" stroke="#e4903a"/></g><circle cx="14" cy="17.500" r="3.600" fill="#3478ee"/><circle cx="14" cy="35" r="3.600" fill="#e4473d"/><circle cx="14" cy="52.500" r="3.600" fill="#e4903a"/></svg></div>
  <div class="app run"><svg viewBox="0 0 70 70"><rect width="70" height="70" rx="16" fill="#efeeea"/><path d="M0 18V16Q0 0 16 0H54Q70 0 70 16V18z" fill="#f6ce47"/><path d="M0 18.500h70" stroke="#b5b0a2" stroke-width="1.500"/><path d="M2 22h66" stroke="#c7c4bb" stroke-dasharray="1.500 1.500"/><path d="M0 35h70M0 53h70" stroke="#cfcdc8" stroke-width="1.500"/></svg></div>
  <div class="app run"><svg viewBox="0 0 70 70"><rect width="70" height="70" rx="16" fill="url(#gTv)"/><use href="#apple" x="9" y="20" width="22" height="28" fill="#fff"/><text x="46" y="45" class="t tv">tv</text></svg></div>
  <div class="app run"><svg viewBox="0 0 70 70"><rect width="70" height="70" rx="16" fill="url(#gMusic)"/><path d="M23 17l29-6v35q0 7-7 7-6 0-6-5t6-6q3 0 3-3V24l-21 4v23q0 7-7 7-6 0-6-5t6-6q3-1 3-3z" fill="#fff"/></svg></div>
  <div class="app run"><svg viewBox="0 0 70 70"><rect width="70" height="70" rx="16" fill="#fff"/><path d="M15 15h14l27 29v11H42L15 26zM40 15h16v17zM15 38v17h16z" fill="#ea4862"/></svg></div>
  <div class="app"><svg viewBox="0 0 70 70"><rect width="70" height="70" rx="16" fill="url(#gBlue)"/><g stroke="#fff" stroke-width="5.500" stroke-linecap="round"><path d="M38 15L22 43M32 15l20 37M13 43h28M50 43h7M18 50l-1.500 4"/></g></svg></div>
  <div class="app"><svg viewBox="0 0 70 70"><rect width="70" height="70" rx="16" fill="url(#gSet)"/><circle cx="35" cy="35" r="29" fill="#3b3c3e"/><circle cx="35" cy="35" r="28" fill="none" stroke="#8e9092" stroke-width="3" stroke-dasharray="2 2"/><circle cx="35" cy="35" r="21" fill="none" stroke="#9a9c9e" stroke-width="5"/><circle cx="35" cy="35" r="6" fill="none" stroke="#9a9c9e" stroke-width="3"/><path d="M41 35h13M32 30l-7-11M32 40l-7 11" stroke="#9a9c9e" stroke-width="3.600"/></svg><em>1</em></div>
  <div class="app run"><svg viewBox="0 0 70 70"><rect width="70" height="70" rx="16" fill="#aeb9bf"/><rect x="2.500" y="2.500" width="65" height="65" rx="14" fill="#050505"/><rect x="7" y="7" width="56" height="56" rx="8" fill="#242424"/><path d="M12 14l7 4-7 5M22 26h10" stroke="#fff" stroke-width="2.200" fill="none"/></svg></div>
  <div class="app"><svg viewBox="0 0 70 70"><path d="M1 4L54-5 73 59 14 72z" fill="#fbfaf8"/><path d="M32 13q11-2 11 5v8q0 5-6 5h-9q-6 1-6 7h-5q-5-3-4-10 0-8 7-8h13v-2H22q0-4 10-5z" fill="#3c72a8"/><path d="M36 52q-11 1-11-6v-7q0-6 6-6h9q6-1 6-7h5q7 3 6 11-1 8-8 8H36v2h11q0 4-11 5z" fill="#efca4e"/><path d="M76 20q5-1 3 4L66 58 52 76l3-19z" fill="#1b1d22"/><path d="M67 55L52 76l3-19 3-8z" fill="#b9b9b9"/></svg></div>
  <div class="app run"><svg viewBox="0 0 70 70"><rect width="70" height="70" rx="16" fill="#fff"/><path d="M46 11v13L15 50l-5-4v-3z" fill="#2a6fba"/><path d="M46 59V46L15 20l-5 4v3z" fill="#2f7fcb"/><path d="M46 11l14 6v36l-14 6z" fill="#479bea"/></svg></div>
  <div class="app run"><svg viewBox="0 0 70 70"><rect width="70" height="70" rx="16" fill="#f4f4f3"/><use href="#chrome" x="5" y="5" width="60" height="60"/></svg></div>
  <div class="app"><svg viewBox="0 0 70 70"><path d="M-8 39l17-10q7 0 12-6l6 12-17 18z" fill="#5a9fd8"/><path d="M27 20Q40-5 48-5q5 1 8 12Q64 42 78 60q-9-8-15-11-8-2-13 7-6 12-18 18-4-12-12-21 10-8 14-14z" fill="url(#gMat)"/><path d="M9 29q8-1 14-8Q38-2 48-5 38 8 32 30 28 40 20 45z" fill="#2f5f93" opacity=".75"/></svg></div>
  <div class="app run"><svg viewBox="0 0 70 70"><rect width="70" height="70" rx="16" fill="url(#gDisc)"/><path transform="translate(9.500 9.500) scale(2.120)" d="M20.317 4.370a19.791 19.791 0 00-4.885-1.515.074.074 0 00-.079.037c-.211.375-.445.865-.608 1.250-1.845-.276-3.680-.276-5.487 0-.164-.393-.406-.874-.618-1.250a.077.077 0 00-.079-.037 19.736 19.736 0 00-4.885 1.515.070.070 0 00-.032.028C.533 9.046-.319 13.580.099 18.058a.082.082 0 00.031.056c2.053 1.508 4.041 2.423 5.993 3.029a.078.078 0 00.084-.028c.462-.630.873-1.295 1.226-1.994a.076.076 0 00-.042-.106c-.653-.248-1.274-.550-1.872-.892a.077.077 0 01-.008-.128c.126-.094.252-.192.372-.291a.074.074 0 01.078-.011c3.928 1.793 8.180 1.793 12.061 0a.074.074 0 01.079.010c.120.099.246.198.373.292a.077.077 0 01-.007.128 12.299 12.299 0 01-1.873.891.077.077 0 00-.041.107c.360.698.772 1.363 1.225 1.993a.076.076 0 00.084.029c1.961-.607 3.950-1.522 6.002-3.029a.077.077 0 00.031-.055c.500-5.177-.838-9.674-3.549-13.660a.061.061 0 00-.031-.029zM8.020 15.331c-1.183 0-2.157-1.086-2.157-2.419 0-1.333.956-2.419 2.157-2.419 1.211 0 2.176 1.095 2.157 2.419 0 1.333-.956 2.419-2.157 2.419zm7.975 0c-1.183 0-2.157-1.086-2.157-2.419 0-1.333.955-2.419 2.157-2.419 1.211 0 2.176 1.095 2.157 2.419 0 1.333-.946 2.419-2.157 2.419z" fill="#fff"/></svg></div>
  <div class="app run"><svg viewBox="0 0 70 70"><rect width="70" height="70" rx="16" fill="url(#gGit)"/><use href="#github" x="6" y="6" width="58" height="58" fill="#efedf4"/></svg></div>
  <i class="sep"></i>
  <div class="app run"><svg viewBox="0 0 70 70"><rect width="70" height="70" rx="16" fill="url(#gKey)"/><circle cx="36" cy="16" r="10" fill="none" stroke="#8d8a86" stroke-width="2.600"/><g fill="#c9cac8"><path d="M36 24l9-1 6 12-5 4 8 22-5 1-9-22z"/><path d="M30 25h10l2 14-4 2v23l-5-2V40z"/><path d="M22 36l8 2-7 20-7 4-2-3z" fill="#a9aaa7"/></g><circle cx="20" cy="37" r="13.500" fill="#f08b33"/><path d="M14 38l10-2 2 6q-5 3-10 2zM23 36q-1-5 3-4 3 2 2 5" fill="#fff" stroke="#fff" stroke-width="1.500"/></svg></div>
  <div class="app run"><svg viewBox="0 0 70 70"><rect width="70" height="70" rx="16" fill="#2860ee"/><text x="35" y="41" class="t zm">zoom</text></svg></div>
  <div class="app"><svg viewBox="0 0 70 70"><rect width="70" height="70" rx="16" fill="url(#gPages)"/><path d="M12 59h47" stroke="#f9d5ad" stroke-width="2"/><path d="M53 13q5-1 4 5L22 53l-10 6 4-10z" fill="#fff" stroke="#d9cfc5"/></svg></div>
  <i class="sep late"></i>
  <div class="app"><svg viewBox="0 0 70 70"><path d="M6-6h57v16H6z" fill="#f1f1f1"/><path d="M9-2h30M9 4h48" stroke="#9a9a9a"/><rect x="4" y="8" width="61" height="61" rx="2" fill="#fafafa"/><path d="M4 8h61v17H4z" fill="#d8544c"/><text x="34" y="21.500" class="t may">MAY</text><text x="35" y="50.500" class="t d28">28</text><text x="35" y="59" class="t tiny">Liam Mohler Interview</text><text x="35" y="65" class="t tiny">2:30 PM - 2:55 PM</text></svg></div>
  <div class="app"><svg viewBox="0 0 70 70"><rect x="-5" y="11" width="80" height="48" fill="#0c0d12"/><path d="M-5 14h80" stroke="#2c2f35" stroke-width="3"/><g stroke="#3a3e46"><path d="M-1 18h24M-1 23h20M6 28h44M0 35h45M0 40h40M0 45h45M0 50h36"/></g><path d="M46 28h5" stroke="#49a25b" stroke-width="2"/><rect x="48" y="47" width="26" height="26" rx="6" fill="#f4f4f3"/><use href="#chrome" x="50" y="49" width="22" height="22"/></svg></div>
  <div class="app"><svg viewBox="0 0 70 70"><path d="M6 6l10-10 9 4 8-6 9 4 9-4 14 12-8 8H12z" fill="#e3e4e2"/><path d="M14 6l8-6 6 8zM30 10l8-10 5 8zM48 8l6-8 6 10z" fill="#6d7f86"/><path d="M34 2l6 4-4 6z" fill="#4fa0a8"/><path d="M4 5q3 7 31 7t31-7l-6 60q-1 8-25 8t-25-8z" fill="url(#gBin)"/><path d="M12 10l6-7 8 9zM26 12l5-9 8 9zM42 12l8-9 8 7z" fill="#d5d7d6"/></svg></div>
</footer>
</body>
</html>
```
FILE: styles.css
```css
* { box-sizing: border-box; }

body {
  margin: 0;
  width: 2940px;
  height: 1912px;
  overflow: hidden;
  display: flex;
  flex-direction: column;
  background: linear-gradient(90deg, #0e2241, #081b3c 55%, #051430) 0 0 / 100% 200px no-repeat, #030b14;
  font-family: Roboto, "Liberation Sans", sans-serif;
  color: #333;
}
svg { display: block; flex: none; overflow: visible; }
.defs { position: absolute; }
em, i { font-style: normal; }

/* menu bar */
.menubar {
  height: 74px;
  flex: none;
  display: flex;
  justify-content: space-between;
  padding: 0 34px 4px 39px;
  color: #f0f2f5;
  font: 500 26px/70px Inter, sans-serif;
}
.menus {
  display: grid;
  grid-template-columns: 67px 143px 84px 88px 100px 128px 175px 133px 84px 137px auto;
  letter-spacing: -.35px;
}
.apple { width: 28px; height: 37px; fill: #f0f2f5; margin-top: 14px; }
.menus .app { font-weight: 700; letter-spacing: .1px; }
.status { display: flex; align-items: center; }
.status svg:nth-child(1) { margin-right: 35px; }
.status svg:nth-child(2) { margin-right: 37px; }
.status svg:nth-child(3) { margin-right: 38px; }
.status svg:nth-child(4) { margin-right: 34px; }
.status svg:nth-child(5) { margin-right: 32px; }
.status time { width: 260px; white-space: nowrap; letter-spacing: .25px; }

/* browser window */
.window {
  position: relative;
  height: 1716px;
  flex: none;
  display: flex;
  flex-direction: column;
  background: #000;
  border-radius: 20px;
  overflow: hidden;
}
.window::after {
  content: "";
  position: absolute;
  inset: 0;
  border-radius: 20px;
  box-shadow: inset 0 0 0 2px rgba(130, 130, 130, .55);
  pointer-events: none;
}
.tabstrip {
  height: 80px;
  flex: none;
  display: flex;
  align-items: center;
  padding: 2px 12px 0 42px;
  color: #fff;
  font: 500 24px/34px Inter, sans-serif;
}
.lights { display: flex; gap: 16px; width: 138px; flex: none; }
.lights i { width: 24px; height: 24px; border-radius: 50%; }
.red { background: #ec6a5e; }
.yellow { background: #f4bf4f; }
.green { background: #61c554; }
.tab {
  width: 476px;
  flex: none;
  height: 32px;
  display: flex;
  align-items: center;
  padding: 0 28px 0 20px;
  border-right: 3px solid #3c3c3c;
}
.tab.last { border-right-color: transparent; }
.fav { width: 32px; height: 32px; margin-right: 16px; }
.name { flex: 1; white-space: nowrap; overflow: hidden; letter-spacing: -.3px; }
.fade {
  margin-right: 20px;
  -webkit-mask: linear-gradient(90deg, #000 88%, transparent 99%);
  mask: linear-gradient(90deg, #000 88%, transparent 99%);
}
.x { width: 18px; height: 18px; }
.tab.active {
  position: relative;
  width: 464px;
  height: 68px;
  margin: 10px 0 0 4px;
  padding: 0 24px 10px 16px;
  border: 0;
  border-radius: 20px 20px 0 0;
  background: #353535;
}
.tab.active::before, .tab.active::after {
  content: "";
  position: absolute;
  bottom: 0;
  width: 22px;
  height: 22px;
}
.tab.active::before { right: 100%; background: radial-gradient(circle at 0 0, transparent 21.5px, #353535 22px); }
.tab.active::after { left: 100%; background: radial-gradient(circle at 100% 0, transparent 21.5px, #353535 22px); }
.newtab { width: 20px; height: 20px; margin-left: 30px; }
.tabsearch {
  width: 56px;
  height: 56px;
  margin-left: auto;
  border-radius: 18px;
  background: #353535;
  display: flex;
  align-items: center;
  justify-content: center;
}

.toolbar {
  height: 94px;
  flex: none;
  display: flex;
  align-items: center;
  padding: 0 28px 0 31px;
  background: #353535;
  border-bottom: 2px solid #6b6b6b;
  border-radius: 18px 18px 0 0;
}
.navbtns { display: flex; gap: 46px; width: 209px; }
.omnibox {
  width: 1920px;
  height: 68px;
  border-radius: 34px;
  background: #202124;
  display: flex;
  align-items: center;
  padding: 0 31px 0 10px;
}
.site {
  width: 48px;
  height: 48px;
  border-radius: 50%;
  background: #353535;
  display: flex;
  align-items: center;
  justify-content: center;
  margin-right: 17px;
}
.url { flex: 1; font: 400 28px/40px Inter, sans-serif; letter-spacing: -.1px; color: #fff; }
.url em { color: #9b9b9b; }
.exts { display: flex; align-items: center; margin-left: 36px; gap: 40px; }
.exts svg { width: 32px; height: 32px; }
.bar { width: 4px; height: 32px; background: #111; margin: 0 -4px; }
.avatar {
  width: 40px;
  height: 40px;
  margin: 0 -4px;
  border-radius: 50%;
  background: #5a4036;
  color: #eee;
  font: 400 21px/40px Roboto, sans-serif;
  text-align: center;
}

/* application header, scrolled under the toolbar */
.apphead {
  position: relative;
  z-index: 2;
  height: 34px;
  flex: none;
  display: flex;
  background: #222a32;
  box-shadow: 0 2px 12px rgba(0, 0, 0, .45);
}
.pick {
  width: 504px;
  height: 34px;
  display: flex;
  align-items: flex-start;
  padding-left: 74px;
  border-right: 4px solid #16191c;
  overflow: hidden;
  color: #b5b9bd;
  font-size: 28px;
  line-height: 30px;
}
.pick span { margin-top: -19px; }
.pick.first { padding-left: 19px; }
.pick svg { margin-right: 29px; }
.query {
  width: 1119px;
  height: 20px;
  margin-left: 20px;
  padding-left: 43px;
  border-radius: 0 0 10px 10px;
  background: #17191b;
}
.query i { display: block; width: 6px; height: 4px; border-radius: 0 0 4px 4px; background: #7c8186; }
.acct { margin-left: auto; width: 104px; border-left: 4px solid #16191c; padding-left: 52px; }
.acct i { display: block; width: 17px; height: 6px; border-radius: 0 0 9px 9px; background: #b5b9bd; }

.page { flex: 1; display: flex; min-height: 0; background: #fff; }
.side { width: 152px; flex: none; background: #222a32; border-right: 2px solid #c9c9c9; }
.side a {
  display: flex;
  flex-direction: column;
  align-items: center;
  height: 138.5px;
  padding-top: 28px;
  color: #fff;
  font-size: 24.5px;
  line-height: 32px;
}
.side a.on { height: 142.5px; background: #54575c; border-bottom: 4px solid #e2b252; }
.side svg { width: 52px; height: 52px; margin-bottom: 4px; }
.www { font: 700 20px "Liberation Sans", sans-serif; fill: #fff; }

.main { position: relative; flex: 1; min-width: 0; overflow: hidden; }
.title { height: 118px; display: flex; align-items: center; padding: 43px 0 0 39px; }
.tclock { width: 55px; height: 55px; margin-right: 19px; margin-top: -2px; }
h1 { margin: -4px 31px 0 0; width: 346px; white-space: nowrap; font: 500 55px/70px "Noto Sans", sans-serif; letter-spacing: -.8px; }
.sync { width: 28px; height: 28px; margin-right: 18px; margin-top: 10px; }
.title span { font-size: 32px; color: #777; margin-top: 11px; }

.charts { position: relative; height: 600px; }
.legend { font-size: 28px; fill: #333; }
.yl, .yr { font: 700 28px "Liberation Sans", sans-serif; fill: #a41e15; }
.yr { fill: #e8bd75; }
.xl { font: 400 22px "Liberation Sans", sans-serif; fill: #545454; }
.card {
  position: absolute;
  left: 100px;
  top: 44px;
  width: 450px;
  height: 177px;
  display: grid;
  grid-template-columns: 146px auto;
  padding: 37px 0 0 40px;
  border-radius: 14px;
  background: rgba(255, 255, 255, .85);
  box-shadow: 0 6px 20px rgba(0, 0, 0, .16);
}
.card b { display: block; font: 400 28px/36px "Noto Sans", sans-serif; letter-spacing: -.4px; white-space: nowrap; }
.card strong { display: block; font: 600 60px/60px "Noto Sans", sans-serif; margin-top: 2px; }
.r { color: #a41e15; }
.y { color: #e8bd75; }

.actions { height: 68px; margin: 97px 70px 0 81px; display: flex; justify-content: space-between; }
.group {
  display: flex;
  height: 68px;
  margin-top: 5px;
  border: 2px solid #e3e3e3;
  border-radius: 8px;
  background: #f5f5f5;
  color: #999;
  font-size: 28px;
}
.group span { display: flex; align-items: center; padding-bottom: 2px; border-right: 2px solid #dedede; white-space: nowrap; }
.group span:last-child { border: 0; }
.group svg { margin-right: 13px; }
.b1 { width: 206px; padding-left: 19px; }
.b2 { width: 234px; padding-left: 26px; }
.b3 { width: 56px; padding-left: 18px; }
.b4 { width: 164px; padding-left: 24px; }
.group .b4 svg { margin-right: 10px; }
.b5 { width: 162px; padding-left: 26px; }
.group .b2 { border-right-color: #ececec; }
.right { display: flex; font-size: 28px; color: #333; }
.export {
  width: 223px;
  height: 68px;
  display: flex;
  align-items: center;
  padding: 0 0 1px 20px;
  gap: 6px;
  border: 2px solid #ccc;
  border-radius: 4px;
  background: #ececec;
  margin-right: 28px;
  white-space: nowrap;
}
.export svg { margin-top: -6px; }
.pg { width: 60px; height: 60px; margin-top: 4px; display: flex; align-items: center; justify-content: center; background: #ececec; }
.prev { border-radius: 8px 0 0 8px; }
.next { border-radius: 0 8px 8px 0; }
.cur { margin: 4px 14px 0; background: #fff; border: 2px solid #e5e5e5; color: #000; }
.show {
  width: 202px;
  height: 58px;
  margin: 5px 0 0 30px;
  padding: 0 6px 0 22px;
  display: flex;
  align-items: center;
  justify-content: space-between;
  border: 2px solid #dcdcdc;
  border-radius: 4px;
  color: #000;
  white-space: nowrap;
}

/* error list */
.check { width: 30px; height: 30px; flex: none; margin: 0 28px; border: 2px solid #767676; border-radius: 6px; background: #fff; }
.cols { display: grid; grid-template-columns: 372px 298px 670px 1fr; }
.tc { width: 196px; text-align: center; white-space: nowrap; }
.thead { display: flex; height: 162px; margin-left: 40px; padding-top: 111px; font-size: 30px; line-height: 30px; }
.thead .cols { flex: 1; }
.thead b { font-weight: 700; letter-spacing: -.1px; white-space: nowrap; }
.thead b svg { display: inline-block; }
.down { margin-left: 8px; vertical-align: -3px; }
.sort { margin-left: 8px; vertical-align: -2px; }
.err { display: flex; margin-top: 5px; }
.err svg { margin: 2px 7px 0 27px; }
.err span { width: 278px; height: 51px; margin-top: -11px; padding: 10px 0 0 5px; border-bottom: 2px solid #ccc; color: #bdbdbd; }

.row {
  display: flex;
  align-items: center;
  margin: 0 40px 4.5px;
  border-radius: 8px;
  background: #f8f8f8;
  font-size: 28px;
}
.body { flex: 1; padding: 20px 0 23.5px; }
.row .cols { min-height: 44px; align-items: center; line-height: 40px; }
.row strong { font-weight: 500; }
.row .tc, .row a { align-self: start; }
.row a { color: #3873ac; font-weight: 700; white-space: pre; }
.row > .check { position: relative; top: -1px; }
.tel { display: flex; gap: 20px; }
.tel span { width: 120px; height: 44px; display: grid; grid-template-columns: 60px 60px; line-height: 44px; text-align: center; background: #fff; border-radius: 8px; overflow: hidden; }
.tel i { display: flex; align-items: center; justify-content: center; }
.tel svg { width: 24px; height: 26px; }
.tel svg.sw { width: 30px; height: 22px; }
.tel svg.pr { width: 28px; height: 20px; margin-top: 4px; }
.g i { background: #76b781; }
.o i { background: #e6b85d; }
.off i { background: #d5d5d5; }
.tel .off { background: #dfdfdf; }

.tags { display: flex; gap: 21px; margin-top: 18px; }
.tags span {
  height: 48px;
  display: flex;
  align-items: center;
  padding-right: 13px;
  border: 2px solid #dcdcdc;
  border-radius: 7px;
  background: #f8f8f8;
  font-size: 24px;
  line-height: 44px;
  white-space: nowrap;
  overflow: hidden;
}
.tags b { font-weight: 400; background: #edf5fd; padding: 0 10px; margin-right: 10px; }
.tags svg { width: 24px; height: 24px; margin-left: 15px; }
.tags svg + svg { margin-left: 14px; }
.row.cut { align-items: flex-start; height: 120px; margin-bottom: 0; }
.cut .check { margin-top: 61px; }

/* shade the dock throws on the bottom of the page */
.page::after {
  content: "";
  position: absolute;
  left: 60px;
  right: 60px;
  bottom: 0;
  height: 80px;
  background: linear-gradient(rgba(0, 0, 0, 0), rgba(0, 0, 0, .13));
  -webkit-mask: linear-gradient(90deg, transparent, #000 80px calc(100% - 110px), transparent);
  mask: linear-gradient(90deg, transparent, #000 80px calc(100% - 110px), transparent);
}

/* dock */
.dock {
  height: 108px;
  flex: none;
  margin: 4px 73px 0;
  padding: 0 3px;
  display: flex;
  border: 2px solid #3a4148;
  border-radius: 36px;
  background: #131b23;
}
.dock .app { position: relative; flex: none; width: 90.12px; padding: 14px 10px 0; }
.dock .app > svg { width: 70px; height: 70px; }
.dock .app.run::after {
  content: "";
  position: absolute;
  left: 40px;
  top: 94px;
  width: 8px;
  height: 8px;
  border-radius: 50%;
  background: #8f959c;
}
.dock em {
  position: absolute;
  left: 56px;
  top: 6px;
  width: 33px;
  height: 33px;
  border-radius: 17px;
  background: #dc4a3c;
  color: #fff;
  font: 400 21px/33px Inter, sans-serif;
  letter-spacing: -.5px;
  text-align: center;
}
.sep { flex: none; width: 2px; height: 80px; margin: 13px 19px; background: #444b53; }
.sep.late { margin: 13px 19px 13px 22px; }
.t { text-anchor: middle; font-family: Inter, sans-serif; fill: #fff; }
.jun { font-size: 16px; font-weight: 600; }
.day { font-size: 42px; fill: #222; font-weight: 300; }
.tv { font-size: 28px; font-weight: 500; }
.zm { font-size: 19px; font-weight: 700; letter-spacing: -.5px; }
.may { font-size: 13px; font-weight: 600; }
.d28 { font-size: 29px; fill: #222; font-weight: 400; letter-spacing: -1px; }
.tiny { font-size: 5px; fill: #666; }
```
